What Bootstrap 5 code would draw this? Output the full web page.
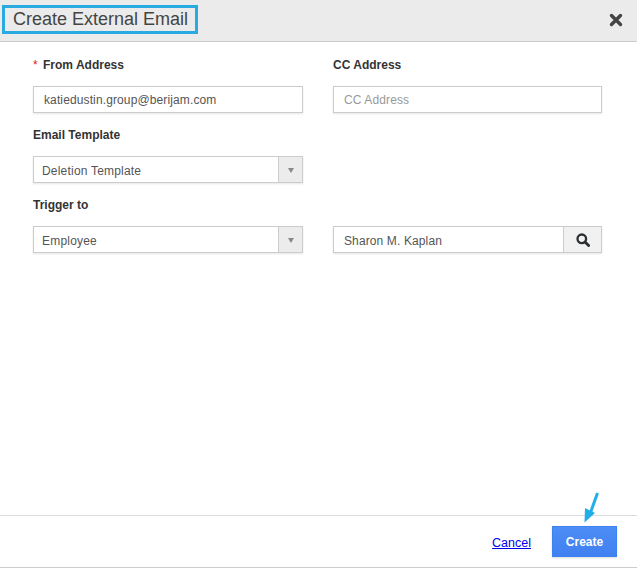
<!DOCTYPE html>
<html lang="en"><head><meta charset="utf-8"><title>Create External Email</title>
<link rel="stylesheet" href="https://cdn.jsdelivr.net/npm/bootstrap@5.3.0/dist/css/bootstrap.min.css">
<style>
html,body{height:568px;overflow:hidden;background:#fff}
body{font-family:"Liberation Sans",Arial,sans-serif;font-size:12px;color:#333}
.dlg{width:637px;height:568px}
.dlg-head{height:42px;background:#ebebeb;border-bottom:1px solid #ccc;padding:5px 14px 0 2px}
.dlg-title{height:29px;border:3px solid #29abe2;padding:0 8px;font-size:18px;line-height:23px;color:#444;width:196px;white-space:nowrap}
.dlg-x{width:14px;height:14px;margin-top:8px;display:block}
.dlg-body{padding:16px 35px 0 33px;column-gap:30px;display:grid;grid-template-columns:270px 269px}
.fld-label{height:14px;line-height:14px;font-weight:700;font-size:12px;color:#333;margin-bottom:14px}
.req{color:#e02020;font-weight:400;margin-right:2px}
.fld{height:27px;border:1px solid #ccc;box-shadow:0 1px 2px rgba(0,0,0,.1);background:#fff;font-size:12px;line-height:27px;color:#555;margin-bottom:15px;overflow:hidden}
.fld-txt{padding-left:10px;letter-spacing:.12px}
.fld-low{line-height:28px}
.fld-in{padding-left:8px;letter-spacing:.2px;line-height:28px}
.ph{color:#999}
.fld-arrow{width:24px;background:#ececec;border-left:1px solid #ccc;padding-top:1px}
.fld-arrow i{display:block;width:0;height:0;border-left:3.5px solid transparent;border-right:3.5px solid transparent;border-top:5px solid #888}
.fld-search{width:38px;background:#f1f1f1;border-left:1px solid #ccc}
.dlg-foot{height:53px;border-top:1px solid #ddd;border-bottom:1px solid #ccc;padding:10px 20px 0 0;margin-top:auto;position:relative}
.lnk{color:#0000ee;font-size:12.5px;text-decoration:underline;margin-right:21px;margin-top:8px}
.create{width:65px;height:31px;padding:0;border:1px solid #3d82ee;border-radius:0;background:linear-gradient(#4c8df6,#4080f0);color:#fff;font-weight:700;font-size:12px;box-shadow:0 1px 2px rgba(0,0,0,.15)}
.pointer{position:absolute;right:35px;top:-24px;width:20px;height:34px}
</style></head><body>
<div class="dlg d-flex flex-column">
 <div class="dlg-head d-flex justify-content-between align-items-start">
  <div class="dlg-title">Create External Email</div>
  <svg class="dlg-x" viewBox="0 0 14 14"><path d="M2.5 2.5 11.5 11.5M11.5 2.5 2.5 11.5" stroke="#444" stroke-width="3.4" stroke-linecap="round"/></svg>
 </div>
 <div class="dlg-body">
  <div><div class="fld-label"><span class="req">*</span> From Address</div><div class="fld fld-txt">katiedustin.group@berijam.com</div></div>
  <div><div class="fld-label">CC Address</div><div class="fld fld-txt ph">CC Address</div></div>
  <div><div class="fld-label">Email Template</div><div class="fld d-flex"><div class="flex-grow-1 fld-in">Deletion Template</div><div class="fld-arrow d-flex align-items-center justify-content-center"><i></i></div></div></div>
  <div></div>
  <div><div class="fld-label">Trigger to</div><div class="fld d-flex"><div class="flex-grow-1 fld-in">Employee</div><div class="fld-arrow d-flex align-items-center justify-content-center"><i></i></div></div></div>
  <div><div class="fld-label">&nbsp;</div><div class="fld d-flex"><div class="flex-grow-1 fld-txt fld-low">Sharon M. Kaplan</div><div class="fld-search d-flex align-items-center justify-content-center"><svg width="14" height="14" viewBox="0 0 14 14"><circle cx="5.8" cy="5.8" r="4.3" fill="none" stroke="#2b3033" stroke-width="2.3"/><path d="M9 9 12.6 12.6" stroke="#2b3033" stroke-width="2.8" stroke-linecap="round"/></svg></div></div></div>
 </div>
 <div class="dlg-foot d-flex justify-content-end align-items-start">
  <a href="#" class="lnk">Cancel</a>
  <button type="button" class="btn create">Create</button>
  <svg class="pointer" viewBox="0 0 20 34"><path d="M15.5 1 8 22" stroke="#22aee6" stroke-width="3" fill="none"/><path d="M3 16 2.5 30.5 13 21Z" fill="#22aee6"/></svg>
 </div>
</div>
</body></html>
